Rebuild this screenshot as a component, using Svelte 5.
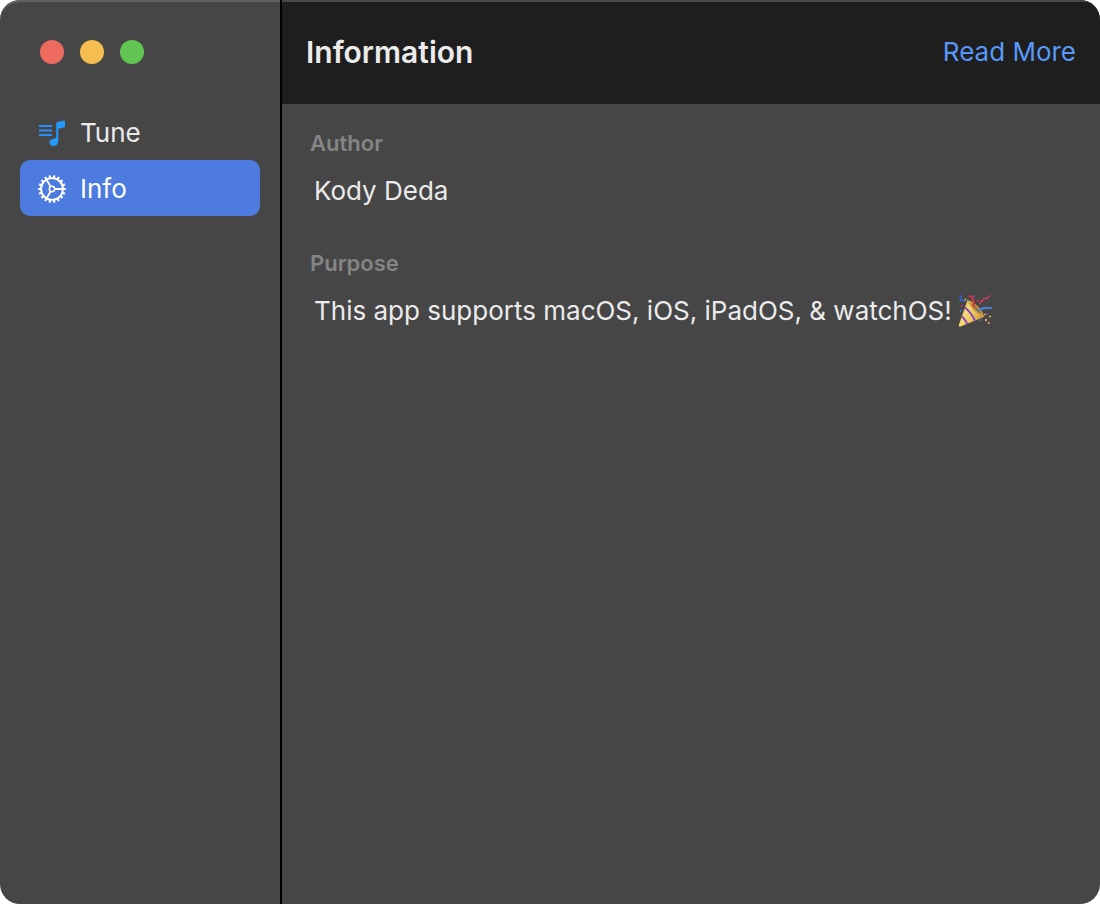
<script>
  const pages = [
    { id: 'tune', label: 'Tune' },
    { id: 'info', label: 'Info' }
  ];
  const lights = [
    { name: 'Close', color: '#ed6a5f' },
    { name: 'Minimize', color: '#f5bf4f' },
    { name: 'Zoom', color: '#61c554' }
  ];
  const fields = [
    { label: 'Author', text: 'Kody Deda', party: false },
    { label: 'Purpose', text: 'This app supports macOS, iOS, iPadOS, & watchOS!', party: true }
  ];
  const teeth = Array.from({ length: 18 }, (_, i) => i * 20);
  let selected = $state('info');
</script>

<div class="window">
  <aside class="sidebar">
    <div class="lights">
      {#each lights as light}
        <button class="light" style="background: {light.color}" aria-label={light.name}></button>
      {/each}
    </div>
    <nav>
      {#each pages as page}
        <button class="item" class:active={selected === page.id} onclick={() => (selected = page.id)}>
          {#if page.id === 'tune'}
            <svg class="icon" viewBox="0 0 28 28" aria-hidden="true">
              <path d="M1 7H14M1 11.5H14M1 16H14" stroke="#2b8ffb" stroke-width="1.9" />
              <path
                d="M18.2 4.7Q18.2 3.3 19.5 3L26 1.6Q27 1.4 27 2.4V7.4Q27 8.3 26.1 8.5L20.3 9.8V21.7C20.3 24.6 18.6 27 15.4 27C13.1 27 11.4 25.7 11.4 23.6C11.4 21.4 13 20.2 15.5 19.7L17.2 19.3Q18.2 19.1 18.2 18Z"
                fill="#2298fb"
              />
            </svg>
          {:else}
            <svg class="icon" viewBox="0 0 28 28" fill="none" stroke="#fff" aria-hidden="true">
              <circle cx="14" cy="14" r="10.9" stroke-width="1.9" />
              <circle cx="14" cy="14" r="2.7" stroke-width="1.5" />
              <path d="M16.8 14H25M12.6 11.6L8.5 4.5M12.6 16.4L8.5 23.5" stroke-width="1.8" />
              {#each teeth as angle}
                <path d="M14 0.2V2.8" stroke-width="2.2" transform="rotate({angle + 10} 14 14)" />
              {/each}
            </svg>
          {/if}
          <span>{page.label}</span>
        </button>
      {/each}
    </nav>
  </aside>

  <main>
    <header>
      <h1>Information</h1>
      <a href="#more">Read More</a>
    </header>
    <div class="content">
      {#each fields as field}
        <section>
          <h2>{field.label}</h2>
          <p>
            <span>{field.text}</span>
            {#if field.party}
              <svg class="party" viewBox="0 0 34 34" role="img" aria-label="Party popper">
                <defs>
                  <linearGradient id="cone" x1="0" y1="0.3" x2="1" y2="0.8">
                    <stop offset="0" stop-color="#c99a3c" />
                    <stop offset="0.3" stop-color="#f6dc7c" />
                    <stop offset="0.65" stop-color="#e6bc52" />
                    <stop offset="1" stop-color="#b9822d" />
                  </linearGradient>
                  <clipPath id="coneClip">
                    <path d="M9.5 6C14 7.5 25 17.5 26 23L2.5 32.6Q.4 33 .8 31Z" />
                  </clipPath>
                </defs>
                <path d="M9.5 6C14 7.5 25 17.5 26 23L2.5 32.6Q.4 33 .8 31Z" fill="url(#cone)" />
                <g clip-path="url(#coneClip)" fill="none" stroke="#8a42c4" stroke-width="2">
                  <path d="M6 13Q13 17.5 17.5 28M2.5 21.5Q7.5 25 9.5 31" />
                </g>
                <path d="M10 6.5C15 6 27 18 25.6 23C20 22 10 12 10 6.5Z" fill="#cfa044" />
                <path d="M13 9C17 10.5 22.5 16 24 20.5C19 18.5 15 14 13 9Z" fill="#a07430" />
                <g fill="none" stroke-linecap="round">
                  <path d="M15.5 12Q17.5 5 11.5 2" stroke="#c93545" stroke-width="2" />
                  <path d="M20 16.5Q25 13 33 14" stroke="#4b83dc" stroke-width="2" />
                  <path d="M1.5 2C4 1 3.5 4.5 2 6C4 8 5.5 5 7 7" stroke="#315fc4" stroke-width="1.6" />
                  <path d="M22 10C21.5 6 26 8 25.5 5.5C25 3 29.5 6 30 3.5Q30.5 2 32 2" stroke="#cc3d61" stroke-width="1.6" />
                </g>
                <circle cx="15.6" cy="2.2" r="1" fill="#9355c6" />
                <circle cx="7.5" cy="5.5" r="1" fill="#dcae42" />
                <circle cx="19.8" cy="6.8" r="1" fill="#c9415a" />
                <circle cx="3.7" cy="11.7" r="1" fill="#cc3d4d" />
                <circle cx="2.5" cy="17" r="1" fill="#3e72d1" />
                <circle cx="29" cy="20" r="1" fill="#7d55b3" />
                <circle cx="32" cy="22.5" r="1.1" fill="#e3b74e" />
                <circle cx="27" cy="20.5" r="1" fill="#e5a25a" />
                <circle cx="28" cy="26" r="1.2" fill="#eda070" />
                <circle cx="22.5" cy="26" r="1.1" fill="#3e72d1" />
                <circle cx="30.8" cy="29" r="1.1" fill="#e5a25a" />
              </svg>
            {/if}
          </p>
        </section>
      {/each}
    </div>
  </main>
</div>

<style>
  :global(body) {
    margin: 0;
    background: #fff;
  }
  .window {
    box-sizing: border-box;
    display: flex;
    min-height: 100vh;
    overflow: hidden;
    border-radius: 20px;
    background: #464646;
    box-shadow: inset 0 2px #626262;
    color: #ebebeb;
    font-family: Inter, 'Liberation Sans', sans-serif;
    font-size: 26px;
    line-height: 32px;
  }
  .sidebar {
    box-sizing: border-box;
    flex: 0 0 282px;
    padding: 40px 20px 20px;
    border-right: 2px solid #000;
  }
  .lights {
    display: flex;
    gap: 16px;
    padding: 0 20px;
    margin-bottom: 40px;
  }
  .light {
    width: 24px;
    height: 24px;
    padding: 0;
    border: 0;
    border-radius: 50%;
  }
  .item {
    display: flex;
    align-items: center;
    gap: 14px;
    width: 100%;
    height: 56px;
    padding: 2px 18px 0;
    border: 0;
    border-radius: 10px;
    background: none;
    color: inherit;
    font: inherit;
    text-align: left;
  }
  .item.active {
    background: #4d7be0;
    color: #fff;
  }
  .icon {
    width: 28px;
    height: 28px;
  }
  main {
    flex: 1;
    min-width: 0;
  }
  header {
    box-sizing: border-box;
    display: flex;
    align-items: center;
    justify-content: space-between;
    height: 104px;
    padding: 0 24px;
    background: #1e1e1e;
    box-shadow: inset 0 2px #484848;
  }
  h1 {
    margin: 0;
    font-size: 30px;
    font-weight: 600;
  }
  a {
    color: #5898f8;
    text-decoration: none;
  }
  .content {
    display: flex;
    flex-direction: column;
    gap: 40px;
    padding: 24px 28px;
  }
  h2 {
    margin: 0;
    color: #848484;
    font-size: 22px;
    font-weight: 600;
    line-height: 30px;
  }
  p {
    display: flex;
    align-items: center;
    gap: 6px;
    min-height: 34px;
    margin: 16px 0 0;
    padding: 0 4px;
  }
  .party {
    flex: none;
    width: 34px;
    height: 34px;
  }
</style>
